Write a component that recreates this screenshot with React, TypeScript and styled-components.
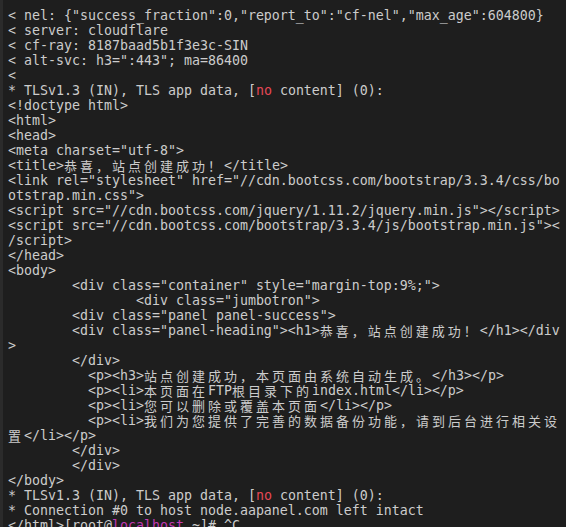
import React from "react";
import styled, { createGlobalStyle } from "styled-components";

const Global = createGlobalStyle`
  html, body { margin: 0; padding: 0; background: #1e1e1e; }
  #root { height: 527px; overflow: hidden; }
`;

const Terminal = styled.div`
  display: flex;
  height: 527px;
  width: 566px;
  background: #1e1e1e;
  overflow: hidden;
`;

const Gutter = styled.div`
  width: 3px;
  flex: none;
  background: #2b2b2b;
`;

const Screen = styled.div`
  flex: 1;
  padding: 7.5px 0 0 5px;
  font-family: "DejaVu Sans Mono", "Noto Sans CJK SC", monospace;
  font-size: 13.29px;
  color: #cccccc;
`;

const Line = styled.div`
  height: 15px;
  line-height: 15px;
  white-space: pre;
`;

const Wide = styled.span`
  display: inline-block;
  width: 16px;
  font-family: "Noto Sans CJK SC", sans-serif;
  font-size: 13px;
  line-height: 15px;
  vertical-align: top;
`;

const Hl = styled.span<{ $tone: "red" | "magenta" }>`
  color: ${(p) => (p.$tone === "red" ? "#e74856" : "#c239b3")};
`;

const CJK = /[\u3000-\u303f\u3400-\u9fff\uff00-\uffef]/;

function renderText(text: string) {
  const out: React.ReactNode[] = [];
  let buf = "";
  let k = 0;
  for (const ch of text) {
    if (CJK.test(ch)) {
      if (buf) { out.push(buf); buf = ""; }
      out.push(<Wide key={k++}>{ch}</Wide>);
    } else {
      buf += ch;
    }
  }
  if (buf) out.push(buf);
  return out;
}

const T = "        ";

const lines: string[] = [
  `< nel: {"success_fraction":0,"report_to":"cf-nel","max_age":604800}`,
  `< server: cloudflare`,
  `< cf-ray: 8187baad5b1f3e3c-SIN`,
  `< alt-svc: h3=":443"; ma=86400`,
  `<`,
  `@TLS`,
  `<!doctype html>`,
  `<html>`,
  `<head>`,
  `<meta charset="utf-8">`,
  `<title>恭喜，站点创建成功！</title>`,
  `<link rel="stylesheet" href="//cdn.bootcss.com/bootstrap/3.3.4/css/bo`,
  `otstrap.min.css">`,
  `<script src="//cdn.bootcss.com/jquery/1.11.2/jquery.min.js"></script>`,
  `<script src="//cdn.bootcss.com/bootstrap/3.3.4/js/bootstrap.min.js"><`,
  `/script>`,
  `</head>`,
  `<body>`,
  `${T}<div class="container" style="margin-top:9%;">`,
  `${T}${T}<div class="jumbotron">`,
  `${T}<div class="panel panel-success">`,
  `${T}<div class="panel-heading"><h1>恭喜，站点创建成功！</h1></div`,
  `>`,
  `${T}</div>`,
  `          <p><h3>站点创建成功，本页面由系统自动生成。</h3></p>`,
  `          <p><li>本页面在FTP根目录下的index.html</li></p>`,
  `          <p><li>您可以删除或覆盖本页面</li></p>`,
  `          <p><li>我们为您提供了完善的数据备份功能，请到后台进行相关设`,
  `置</li></p>`,
  `${T}</div>`,
  `${T}</div>`,
  `</body>`,
  `@TLS`,
  `* Connection #0 to host node.aapanel.com left intact`,
  `@PROMPT`,
];

export default function App() {
  return (
    <>
      <Global />
      <Terminal>
        <Gutter />
        <Screen>
          {lines.map((l, i) => {
            if (l === "@TLS") {
              return (
                <Line key={i}>
                  {"* TLSv1.3 (IN), TLS app data, ["}
                  <Hl $tone="red">no</Hl>
                  {" content] (0):"}
                </Line>
              );
            }
            if (l === "@PROMPT") {
              return (
                <Line key={i}>
                  {"</html>[root@"}
                  <Hl $tone="magenta">localhost</Hl>
                  {" ~]# ^C"}
                </Line>
              );
            }
            return <Line key={i}>{renderText(l)}</Line>;
          })}
        </Screen>
      </Terminal>
    </>
  );
}
